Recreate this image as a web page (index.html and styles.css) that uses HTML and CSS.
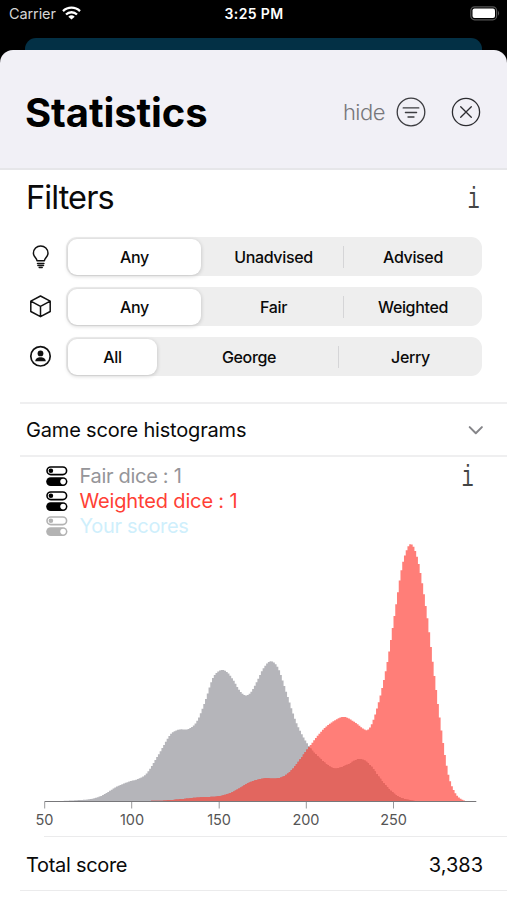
FILE: index.html
```html
<!DOCTYPE html>
<html lang="en">
<head>
<meta charset="utf-8">
<title>Statistics</title>
<link rel="stylesheet" href="styles.css">
</head>
<body>
<div class="screen">
  <div class="status">
    <div class="carrier"><span>Carrier</span>
      <svg width="19" height="14" viewBox="0 0 19 14" fill="none" stroke="#fff" stroke-width="2.3"><path d="M1 5.1a12.2 12.2 0 0 1 17 0"/><path d="M4 8.5a7.8 7.8 0 0 1 11 0"/><path d="M9.500 13.600 6.300 10.800a4.700 4.700 0 0 1 6.400 0z" fill="#fff" stroke="none"/></svg>
    </div>
    <div class="time">3:25 PM</div>
    <svg class="battery" width="31" height="15" viewBox="0 0 31 15"><rect x=".8" y=".8" width="25.800" height="13" rx="3.800" fill="none" stroke="#555" stroke-width="1.200"/><rect x="2.500" y="2.500" width="22.500" height="9.600" rx="2" fill="#fff"/><path d="M28 4.800q2.200 2.500 0 5z" fill="#555"/></svg>
  </div>
  <div class="behind"></div>
  <main class="sheet">
    <header class="header">
      <h1>Statistics</h1>
      <span class="hide">hide</span>
      <svg class="hicon" width="30" height="30" viewBox="0 0 30 30" fill="none" stroke="#3c3c40" stroke-width="1.300" stroke-linecap="round"><circle cx="15" cy="15" r="13.800"/><path d="M7.200 10.900h15.600M9.400 15.500h11.200M12 20h6"/></svg>
      <svg class="hicon close" width="30" height="30" viewBox="0 0 30 30" fill="none" stroke="#2c2c30" stroke-width="1.300" stroke-linecap="round"><circle cx="15" cy="15" r="13.600"/><path d="m9.700 9.700 10.600 10.600M20.300 9.700 9.700 20.300"/></svg>
    </header>

    <section class="filters">
      <div class="title"><h2>Filters</h2><span class="info">i</span></div>
      <div class="row">
        <svg width="30" height="30" viewBox="0 0 30 30" fill="none" stroke="#111" stroke-width="1.500" stroke-linecap="round" stroke-linejoin="round"><path d="M11 18.800c-.2-2.900-3.600-4-3.600-7.600a7.300 7.300 0 0 1 14.600 0c0 3.600-3.400 4.700-3.600 7.600z"/><path d="M11.500 21.500h6.400M11.900 23.600h5.600M13.200 25.500h3" stroke-width="1.500"/></svg>
        <div class="segments even"><span class="on">Any</span><span>Unadvised</span><span class="cut">Advised</span></div>
      </div>
      <div class="row">
        <svg width="30" height="30" viewBox="0 0 30 30" fill="none" stroke="#111" stroke-width="1.500" stroke-linejoin="round"><path d="m14.500 4 9.700 5.100v10.400l-9.700 5.200-9.700-5.200V9.100zM4.800 9.100l9.700 5.200 9.700-5.200M14.500 14.300v10.400"/></svg>
        <div class="segments even"><span class="on">Any</span><span>Fair</span><span class="cut">Weighted</span></div>
      </div>
      <div class="row">
        <svg width="30" height="30" viewBox="0 0 30 30" fill="#111"><circle cx="14.500" cy="14.300" r="9.700" fill="none" stroke="#111" stroke-width="1.700"/><circle cx="14.500" cy="11.400" r="2.900"/><path d="M9.300 19.200c0-5.400 10.400-5.400 10.400 0z"/></svg>
        <div class="segments players"><span class="on">All</span><span>George</span><span class="cut">Jerry</span></div>
      </div>
    </section>

    <section class="histograms">
      <div class="group"><h3>Game score histograms</h3>
        <svg width="16" height="10" viewBox="0 0 16 10" fill="none" stroke="#858589" stroke-width="2" stroke-linecap="round" stroke-linejoin="round"><path d="m1.700 2.100 6.100 6.100 6.100-6.100"/></svg>
      </div>
      <div class="legend">
        <svg class="defs" width="0" height="0"><defs><g id="switch"><rect x="1" y="1" width="19.600" height="7.600" rx="3.800" fill="none" stroke="currentColor" stroke-width="1.600"/><circle cx="4.900" cy="4.800" r="2.300" fill="currentColor"/><rect x=".2" y="11.200" width="21.200" height="8.800" rx="4.400" fill="currentColor"/><circle cx="17.100" cy="15.600" r="2.800" fill="#fff"/></g></defs></svg>
        <ul>
          <li><svg width="22" height="20"><use href="#switch"/></svg><span class="fair">Fair dice : 1</span></li>
          <li><svg width="22" height="20"><use href="#switch"/></svg><span class="weighted">Weighted dice : 1</span></li>
          <li class="off"><svg width="22" height="20"><use href="#switch"/></svg><span class="yours">Your scores</span></li>
        </ul>
        <span class="info">i</span>
      </div>
      <svg class="chart" width="507" height="298" viewBox="0 538 507 298">
        <path id="fair" fill="#b5b5ba"/>
        <path id="weighted" fill="#ff0c00" fill-opacity=".53"/>
        <path id="overlap" fill="#e2665f"/>
        <path d="M44.500 801.500H476.300" stroke="#77777a"/>
        <path d="M44.700 802v6.500M131.700 802v6.500M219.200 802v6.500M306.300 802v6.500M393.500 802v6.500" stroke="#99999c"/>
        <g class="labels"><text x="44.500" y="825">50</text><text x="132" y="825">100</text><text x="219" y="825">150</text><text x="306" y="825">200</text><text x="393.500" y="825">250</text></g>
      </svg>
    </section>

    <section class="total"><span class="name">Total score</span><span>3,383</span></section>
  </main>
</div>
<script src="chart.js"></script>
</body>
</html>
```
FILE: styles.css
```css
* { box-sizing: border-box; }
body { margin: 0; background: #000; font-family: Inter, "Liberation Sans", sans-serif; color: #0a0a0a; }
h1, h2, h3, ul { margin: 0; padding: 0; font-weight: 400; }
svg { display: block; flex: none; }
.screen { width: 507px; height: 900px; overflow: hidden; display: flex; flex-direction: column; background: #000; }
.status { height: 38px; flex: none; display: grid; grid-template-columns: 1fr auto 1fr; color: #fff; font-size: 14.500px; line-height: 28px; }
.carrier { display: flex; gap: 6px; padding-left: 9px; color: #d5d5d5; letter-spacing: -.1px; }
.carrier svg { margin-top: 6px; }
.time { font-weight: 600; font-size: 14px; letter-spacing: .35px; padding-left: 1px; }
.battery { justify-self: end; margin: 6px 6px 0 0; }
.behind { height: 12px; flex: none; margin: 0 25px; background: #033045; border-radius: 11px 11px 0 0; }
.sheet { flex: 1; background: linear-gradient(#000 0 20px, #fff 20px); display: flex; flex-direction: column; }
.header { height: 120px; flex: none; display: flex; align-items: center; padding: 6px 26px 0 25px; background: #f1f0f6; border-bottom: 2px solid #e6e6e9; border-radius: 13px 13px 0 0; }
h1 { font-size: 40px; font-weight: 700; letter-spacing: -.1px; color: #000; }
.hide { margin-left: auto; font-size: 22px; font-weight: 300; color: #77777b; letter-spacing: -.5px; }
.hicon { margin-left: 11px; }
.hicon.close { margin-left: 25px; }
.filters { height: 232px; flex: none; padding: 0 25px 0 26px; }
.title { display: flex; justify-content: space-between; height: 67px; line-height: 55px; }
h2 { font-size: 32.500px; letter-spacing: -.9px; }
.info { font-family: "Liberation Mono", monospace; font-size: 29px; color: #444; transform: scaleX(.7); }
.title .info { line-height: 61px; }
.row { display: flex; align-items: center; gap: 10px; height: 39px; margin-bottom: 11.200px; }
.segments { flex: 1; height: 39px; display: grid; padding: 2px; background: #eee; border-radius: 11px; font-size: 16px; font-weight: 500; line-height: 36px; text-align: center; letter-spacing: -.35px; }
.even { grid-template-columns: 133px 1fr 136px; }
.players { grid-template-columns: 89px 1fr 141px; }
.segments span { position: relative; padding-left: 2px; }
.segments .on { padding-left: 0; background: #fff; border-radius: 9px; box-shadow: 0 1px 4px rgba(0,0,0,.2); }
.segments .cut::before { content: ""; position: absolute; left: -1px; top: 7px; width: 1px; height: 22px; background: #d5d5d7; }
.histograms { flex: none; }
.group { height: 55px; margin-left: 20px; padding: 0 23px 0 6px; display: flex; align-items: center; justify-content: space-between; border-top: 2px solid #efeff0; border-bottom: 2px solid #efeff0; }
h3 { font-size: 20px; letter-spacing: -.18px; }
.legend { height: 81px; display: flex; justify-content: space-between; padding: 7px 31px 0 46px; }
.legend .info { line-height: 30px; }
.defs { position: absolute; }
ul { list-style: none; }
li { height: 24.700px; display: flex; align-items: center; gap: 11.500px; font-size: 20px; color: #000; letter-spacing: -.15px; }
.fair { color: #959599; letter-spacing: -.3px; }
.weighted { color: #ff4035; }
.off { color: #b3b3b3; }
.yours { color: #cfeffc; letter-spacing: -.3px; }
.labels { font-size: 14.500px; fill: #555; text-anchor: middle; letter-spacing: -.1px; }
.total { height: 55px; flex: none; display: flex; justify-content: space-between; align-items: center; padding: 2px 24px 0 26px; font-size: 20px; background: linear-gradient(#ebebec, #ebebec) 44px 0 / 463px 1px no-repeat, linear-gradient(#ebebec, #ebebec) 20px 100% / 487px 1px no-repeat; }
.name { letter-spacing: -.3px; }
```
FILE: chart.js
```js
const BASE = 801.5;
const START = 44.5;
const STEP = 1.745;

const fair = [[44,801.5],[60,801],[75,800.3],[90,799.2],[97,797.5],[104,794.5],[117,786.5],[130,781.3],[138,779],[146.7,773.3],[158.3,755],[170,735],[175,731],[180,729.4],[188.3,729],[196.7,721.7],[205,701.7],[212,680],[217,672.5],[222.7,670],[228,673],[233.3,680],[240,691],[246,695.5],[251,692],[256.7,682],[263.3,668.5],[270.7,661.3],[278.3,668.3],[286.7,693.3],[296.7,723.3],[309.3,746.7],[320,758.3],[329,766],[336,768.5],[346.700,765],[360,759],[370,765],[380,778.3],[390,790],[400,797.3],[413,800.7],[422,801.5]];
const weighted = [[130,801.5],[145,801],[163,800.6],[175,799.7],[200,797.3],[220,796],[233.3,791.7],[250,782.3],[263.3,778.5],[280,777.8],[291.7,770],[309.3,746.7],[323.3,729.3],[336.7,719.3],[345,717],[355,722.3],[365.7,730],[370,727.5],[375,715],[381.7,690],[388.3,656.7],[395,611.7],[401.7,568.3],[406.7,550],[410.7,544],[415,550],[420,570],[427.3,616.7],[434,672],[441.7,732],[448.3,774],[455,792.5],[461.7,799.4],[468,801.5]];

// Interpolates a curve with cubic Hermite segments.
function sample(pts, x) {
  if (x <= pts[0][0] || x >= pts[pts.length - 1][0]) return BASE;
  let i = 0;
  while (pts[i + 1][0] < x) i++;
  const a = pts[i], b = pts[i + 1];
  const p = pts[i - 1] || a, n = pts[i + 2] || b;
  const h = b[0] - a[0], t = (x - a[0]) / h;
  const m0 = (b[1] - p[1]) / (b[0] - p[0]) * h;
  const m1 = (n[1] - a[1]) / (n[0] - a[0]) * h;
  const t2 = t * t, t3 = t2 * t;
  return Math.min(BASE, (2*t3 - 3*t2 + 1) * a[1] + (t3 - 2*t2 + t) * m0 + (3*t2 - 2*t3) * b[1] + (t3 - t2) * m1);
}

// One bar per score, joined into a single stepped outline.
function draw(id, height) {
  let d = `M${START} ${BASE}`;
  for (let i = 0; i < 247; i++) {
    const x = START + i * STEP;
    d += `V${height(x + STEP / 2).toFixed(2)}H${(x + STEP).toFixed(2)}`;
  }
  document.getElementById(id).setAttribute("d", d + `V${BASE}Z`);
}

draw("fair", x => sample(fair, x));
draw("weighted", x => sample(weighted, x));
draw("overlap", x => Math.max(sample(fair, x), sample(weighted, x)));
```
